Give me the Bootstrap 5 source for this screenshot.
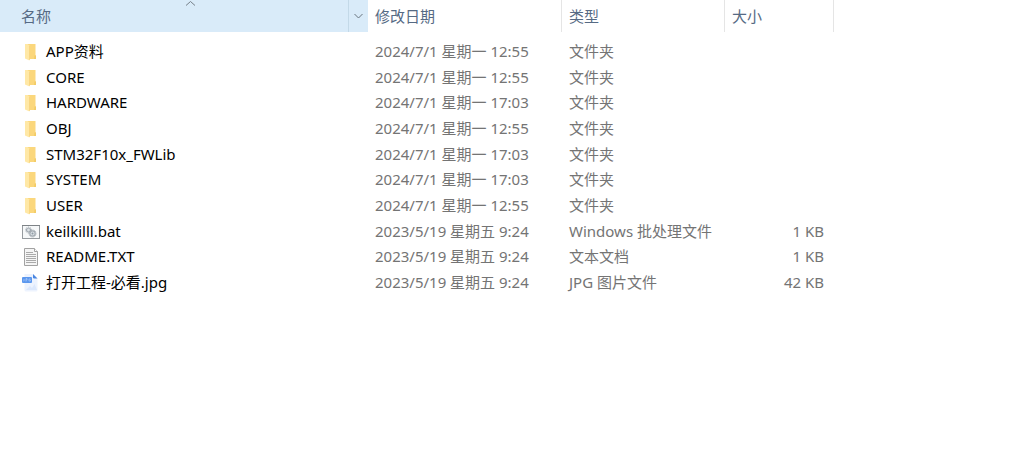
<!DOCTYPE html>
<html lang="zh-CN">
<head>
<meta charset="utf-8">
<meta name="viewport" content="width=device-width, initial-scale=1">
<title>文件列表</title>
<link href="https://cdn.jsdelivr.net/npm/bootstrap@5.3.0/dist/css/bootstrap.min.css" rel="stylesheet">
<style>
body { font-family: "Noto Sans", "Noto Sans CJK SC", sans-serif; font-size: 15px; line-height: 20px; background: #fff; }
.files { --bs-table-bg: transparent; table-layout: fixed; height: 295px; color: #747474; white-space: nowrap; }
.files > thead > tr { height: 38px; }
.files > thead > tr > th { padding: 0; border: 0; font-weight: 400; vertical-align: top; color: #566a84; }
.files > tbody > tr > td { padding: 0 0 0 7px; border: 0; vertical-align: middle; }
.files > tbody > tr > td.size { padding-right: 10px; }
.files > tbody > tr > td.name { padding-left: 22px; color: #000; }
.head { height: 32px; padding-left: 7px; border-right: 1px solid #e5e5e5; }
.head-sorted { background: #d9ebf9; padding-left: 21px; border-right: 0; }
.head-menu { width: 20px; border: 0; border-left: 1px solid #c3d9e8; background: transparent; }
.sort-mark { top: 0; left: 185px; }
.col-name { width: 368px; } .col-date { width: 194px; } .col-type { width: 163px; } .col-size { width: 109px; }
.file-icon { width: 20px; height: 18px; flex: none; }
</style>
</head>
<body>
<svg class="d-none" aria-hidden="true">
  <symbol id="folder" viewBox="0 0 20 18">
    <path d="M5 1h8.500v11.500h.5V16H7z" fill="#fbd77c"/>
    <path d="M12.500 12.500H14V16h-2z" fill="#f3cc68"/>
    <path d="M3 1h2.500l2 1.500V17.500L3 15.500z" fill="#ffe8a6"/>
    <path d="M7.500 3v14" stroke="#f6d37a" stroke-width=".7"/>
  </symbol>
  <symbol id="batch" viewBox="0 0 20 18">
    <rect x=".5" y="2.500" width="17" height="13" fill="#f6f8f9" stroke="#969b9f"/>
    <path d="M0 2.500h18" stroke="#7e8387"/>
    <g fill="#dce2e6" stroke="#a3abb2" stroke-width="1.200">
      <circle cx="6.500" cy="7" r="2"/><circle cx="10.500" cy="10.500" r="2.700"/>
    </g>
    <g fill="none" stroke="#a3abb2" stroke-dasharray="1 1.200">
      <circle cx="6.500" cy="7" r="3"/><circle cx="10.500" cy="10.500" r="3.600"/>
    </g>
    <circle cx="10.500" cy="10.500" r="1" fill="#8f9ba5"/>
  </symbol>
  <symbol id="text" viewBox="0 0 20 18">
    <path d="M2.500.5h10l3 3v14h-13z" fill="#f5f5f5" stroke="#a2a2a2"/>
    <path d="M12.500.5v3h3" fill="#fff" stroke="#a2a2a2"/>
    <path d="M4 4.500h7M4 6.500h10M4 8.500h10M4 10.500h10M4 12.500h10M4 14.500h10" stroke="#aaa"/>
  </symbol>
  <symbol id="image" viewBox="0 0 20 18">
    <path d="M2.500 0H11l4.500 4.500V16q0 1.500-1.500 1.500H4Q2.500 17.500 2.500 16z" fill="#edf3fe"/>
    <path d="M11 0l4.500 4.500h-3.300Q11 4.500 11 3.300z" fill="#4a86e0"/>
    <path d="M4 16l4-4 2 2 2.500-4 2.500 6z" fill="#dce8fc"/>
    <rect x="0" y="3" width="10" height="6" rx="1" fill="#5b97ee"/>
    <path d="M2 5v2H1.500M4 7.500V4.500h1V6H4M8.500 5H7v2h1.500V6" fill="none" stroke="#a9c9f8" stroke-width=".7"/>
  </symbol>
</svg>
<main class="table-responsive">
<table class="table files mb-0">
  <colgroup><col class="col-name"><col class="col-date"><col class="col-type"><col class="col-size"><col></colgroup>
  <thead>
    <tr>
      <th scope="col" aria-sort="ascending">
        <div class="head head-sorted d-flex align-items-center position-relative">
          <svg class="sort-mark position-absolute" width="11" height="7" aria-hidden="true"><path d="M1 5.500l4.500-4 4.500 4" fill="none" stroke="#768089"/></svg>
          <span>名称</span>
          <button type="button" class="head-menu h-100 p-0 ms-auto d-flex align-items-center justify-content-center" aria-label="筛选">
            <svg width="9" height="6" aria-hidden="true"><path d="M.5 1l4 4 4-4" fill="none" stroke="#68747e"/></svg>
          </button>
        </div>
      </th>
      <th scope="col"><div class="head d-flex align-items-center">修改日期</div></th>
      <th scope="col"><div class="head d-flex align-items-center">类型</div></th>
      <th scope="col"><div class="head d-flex align-items-center">大小</div></th>
      <td class="p-0 border-0"></td>
    </tr>
  </thead>
  <tbody>
    <tr><td class="name"><div class="d-flex align-items-end gap-1"><svg class="file-icon"><use href="#folder"/></svg><span>APP资料</span></div></td><td>2024/7/1 星期一 12:55</td><td>文件夹</td><td></td><td></td></tr>
    <tr><td class="name"><div class="d-flex align-items-end gap-1"><svg class="file-icon"><use href="#folder"/></svg><span>CORE</span></div></td><td>2024/7/1 星期一 12:55</td><td>文件夹</td><td></td><td></td></tr>
    <tr><td class="name"><div class="d-flex align-items-end gap-1"><svg class="file-icon"><use href="#folder"/></svg><span>HARDWARE</span></div></td><td>2024/7/1 星期一 17:03</td><td>文件夹</td><td></td><td></td></tr>
    <tr><td class="name"><div class="d-flex align-items-end gap-1"><svg class="file-icon"><use href="#folder"/></svg><span>OBJ</span></div></td><td>2024/7/1 星期一 12:55</td><td>文件夹</td><td></td><td></td></tr>
    <tr><td class="name"><div class="d-flex align-items-end gap-1"><svg class="file-icon"><use href="#folder"/></svg><span>STM32F10x_FWLib</span></div></td><td>2024/7/1 星期一 17:03</td><td>文件夹</td><td></td><td></td></tr>
    <tr><td class="name"><div class="d-flex align-items-end gap-1"><svg class="file-icon"><use href="#folder"/></svg><span>SYSTEM</span></div></td><td>2024/7/1 星期一 17:03</td><td>文件夹</td><td></td><td></td></tr>
    <tr><td class="name"><div class="d-flex align-items-end gap-1"><svg class="file-icon"><use href="#folder"/></svg><span>USER</span></div></td><td>2024/7/1 星期一 12:55</td><td>文件夹</td><td></td><td></td></tr>
    <tr><td class="name"><div class="d-flex align-items-end gap-1"><svg class="file-icon"><use href="#batch"/></svg><span>keilkilll.bat</span></div></td><td>2023/5/19 星期五 9:24</td><td>Windows 批处理文件</td><td class="size text-end">1 KB</td><td></td></tr>
    <tr><td class="name"><div class="d-flex align-items-end gap-1"><svg class="file-icon"><use href="#text"/></svg><span>README.TXT</span></div></td><td>2023/5/19 星期五 9:24</td><td>文本文档</td><td class="size text-end">1 KB</td><td></td></tr>
    <tr><td class="name"><div class="d-flex align-items-end gap-1"><svg class="file-icon"><use href="#image"/></svg><span>打开工程-必看.jpg</span></div></td><td>2023/5/19 星期五 9:24</td><td>JPG 图片文件</td><td class="size text-end">42 KB</td><td></td></tr>
  </tbody>
</table>
</main>
<script src="https://cdn.jsdelivr.net/npm/bootstrap@5.3.0/dist/js/bootstrap.bundle.min.js"></script>
</body>
</html>
